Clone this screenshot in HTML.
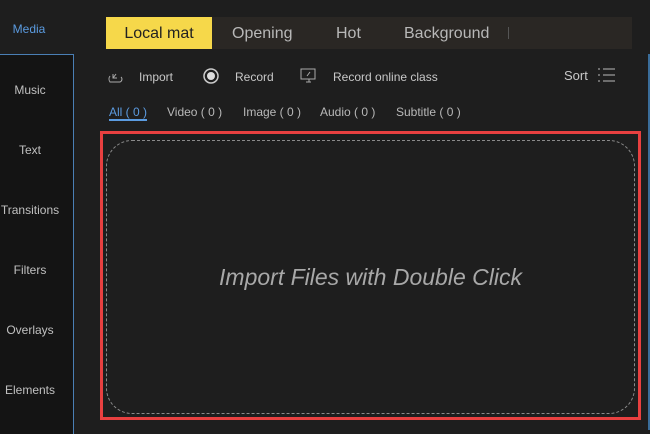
<!DOCTYPE html>
<html><head><style>
*{margin:0;padding:0;box-sizing:border-box}
body{width:650px;height:430px;background:#1e1e1e;font-family:"Liberation Sans",sans-serif;position:relative;overflow:hidden;color:#c8c8c8}
.side{position:absolute;left:0;top:54px;width:74px;height:380px;background:#141414;border-top:1px solid #4a7fb5;border-right:1px solid #4a7fb5}
.si{position:absolute;width:60px;text-align:center;font-size:12px;color:#c0c0c0;left:0}
.media{position:absolute;left:0;top:22px;width:58px;text-align:center;font-size:12px;color:#5b9be0}
.tabs{position:absolute;left:106px;top:17px;width:526px;height:32px;background:#2a2724}
.tab{position:absolute;top:1px;height:32px;line-height:32px;font-size:16px;color:#b8b8b8}
.t1{left:0;top:0;width:106px;line-height:34px;background:#f6d84a;color:#222;text-align:center}
.tb{position:absolute;font-size:12px;color:#c8c8c8;top:70px}
.f{position:absolute;top:105px;font-size:12px;color:#b8b8b8}
.red{position:absolute;left:100px;top:131px;width:541px;height:289px;border:3px solid #e84040}
.dash{position:absolute;left:106px;top:140px;width:529px;height:274px;border:1px dashed #8a8a8a;border-radius:26px}
.msg{position:absolute;left:100px;width:541px;top:264px;text-align:center;font-size:23px;font-style:italic;color:#a8a8a8}
</style></head><body>
<div class="media">Media</div>
<div class="side"></div>
<div class="si" style="top:83px">Music</div>
<div class="si" style="top:143px">Text</div>
<div class="si" style="top:203px">Transitions</div>
<div class="si" style="top:263px">Filters</div>
<div class="si" style="top:323px">Overlays</div>
<div class="si" style="top:383px">Elements</div>
<div style="position:absolute;left:648px;top:54px;width:2px;height:376px;background:#3a6d9a"></div>
<div class="tabs">
<div class="tab t1">Local mat</div>
<div class="tab" style="left:126px">Opening</div>
<div class="tab" style="left:230px">Hot</div>
<div class="tab" style="left:298px">Background</div>
<div style="position:absolute;left:402px;top:10px;width:1px;height:12px;background:#555"></div>
</div>
<svg style="position:absolute;left:107px;top:68px" width="16" height="16" viewBox="0 0 16 16" fill="none" stroke="#aaa" stroke-width="1"><path d="M3 8a5 5 0 0 0 0 6h10a3 3 0 0 0 1-5"/><path d="M6 10l3-4M6 6v4h4"/></svg>
<div class="tb" style="left:139px">Import</div>
<svg style="position:absolute;left:202px;top:67px" width="18" height="18"><circle cx="9" cy="9" r="7" stroke="#ccc" stroke-width="1.5" fill="none"/><circle cx="9" cy="9" r="4" fill="#ddd"/></svg>
<div class="tb" style="left:235px">Record</div>
<svg style="position:absolute;left:299px;top:67px" width="18" height="18" fill="none" stroke="#aaa"><rect x="2" y="2" width="14" height="10"/><path d="M7 15h5M10 12v3M8 9l3-4"/></svg>
<div class="tb" style="left:333px">Record online class</div>
<div style="position:absolute;left:564px;top:68px;font-size:13px;color:#c8c8c8">Sort</div>
<svg style="position:absolute;left:597px;top:67px" width="20" height="16" stroke="#bbb"><path d="M1 2h2M6 2h12M1 8h2M6 8h12M1 14h2M6 14h12"/></svg>
<div class="f" style="left:109px;color:#5b9be0;border-bottom:2px solid #5b9be0;padding-bottom:0">All ( 0 )</div>
<div class="f" style="left:167px">Video ( 0 )</div>
<div class="f" style="left:243px">Image ( 0 )</div>
<div class="f" style="left:320px">Audio ( 0 )</div>
<div class="f" style="left:396px">Subtitle ( 0 )</div>
<div class="red"></div>
<div class="dash"></div>
<div class="msg">Import Files with Double Click</div>
</body></html>
